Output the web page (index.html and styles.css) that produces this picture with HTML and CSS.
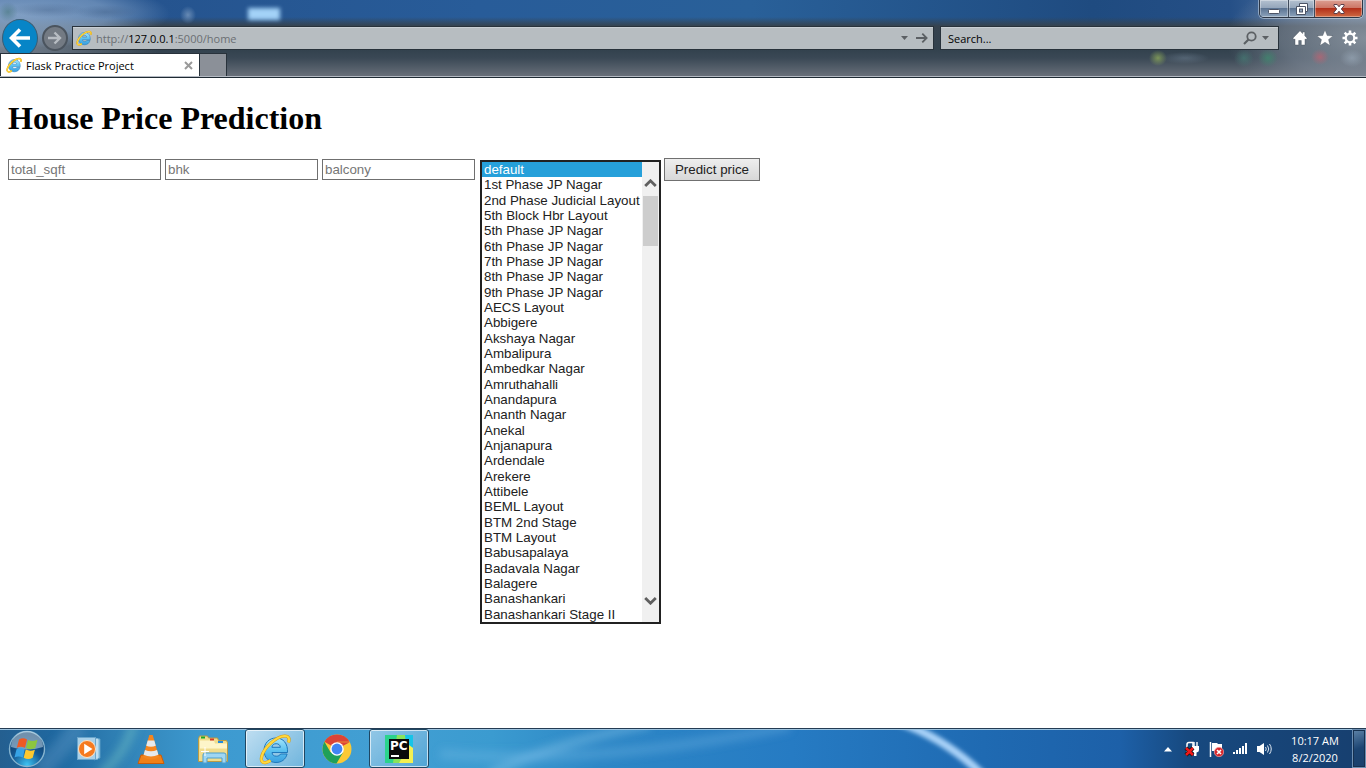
FILE: index.html
```html
<!DOCTYPE html>
<html lang="en">
<head>
<meta charset="utf-8">
<title>Flask Practice Project</title>
<link rel="stylesheet" href="styles.css">
</head>
<body>
<svg class="sprite" aria-hidden="true">
  <defs>
    <linearGradient id="ieBlue" x1="0" y1="0" x2="0" y2="1">
      <stop offset="0" stop-color="#a8e6fc"/><stop offset="0.5" stop-color="#5cc2f0"/><stop offset="1" stop-color="#3a9fdf"/>
    </linearGradient>
    <symbol id="ie" viewBox="0 0 32 32">
      <path d="M28.500 19.500H13C13.300 22 14.800 23.200 17.300 23.200c2 0 3.500-.7 4.300-2.200h6.500C26.700 26.500 22.500 29.500 17 29.500 10 29.500 5 24.500 5 17.500 5 10.300 10 5 17 5c7.300 0 12 5.500 11.500 14.500zM12.900 14.300h8.500c-.3-2.300-1.900-3.600-4.200-3.600-2.400 0-3.900 1.300-4.300 3.600z" fill="url(#ieBlue)" stroke="#1f78bb" stroke-width="1"/>
      <path d="M29.500 9.500C31 5.500 29.500 2.700 25.500 3 17.500 3.600 6 13.500 3 22.500c-1.800 5.200.3 8 4.200 7 1.400-.4 2.800-1 4.300-2" fill="none" stroke="#d89b10" stroke-width="3.200"/>
      <path d="M29.500 9.500C31 5.500 29.500 2.700 25.500 3 17.500 3.600 6 13.500 3 22.500c-1.800 5.200.3 8 4.200 7 1.400-.4 2.800-1 4.300-2" fill="none" stroke="#ffd83c" stroke-width="2.200"/>
    </symbol>
  </defs>
</svg>

<header class="browser">
  <div class="titlebar">
    <div class="window-controls">
      <button class="wc wc-min" type="button" aria-label="Minimize"><svg width="14" height="14" viewBox="0 0 14 14"><rect x="1.500" y="7.500" width="11" height="4" rx="1" fill="#fff" stroke="#4c5466"/></svg></button>
      <button class="wc wc-max" type="button" aria-label="Restore"><svg width="12" height="12" viewBox="0 0 12 12"><path d="M3.500.5h8v8h-2v3h-9v-8h3z" fill="#fff" stroke="#4c5466"/><path d="M3 3.500h6.500v5.500" fill="none" stroke="#4c5466"/><rect x="3.500" y="6" width="3" height="3" fill="#8fa3ba" stroke="#4c5466"/></svg></button>
      <button class="wc wc-close" type="button" aria-label="Close"><svg width="12" height="10" viewBox="0 0 12 10"><path d="M1 .5h3.200L6 2.800 7.800.5H11v1.300L8.300 5 11 8.200v1.300H7.800L6 7.200 4.200 9.500H1V8.200L3.700 5 1 1.800z" fill="#fff" stroke="#5a3e4a"/></svg></button>
    </div>
  </div>
  <div class="nav">
    <button class="back" type="button" aria-label="Back"><svg width="22" height="20" viewBox="0 0 22 20"><path d="M21 10H3M11 1.500L2.500 10l8.500 8.500" fill="none" stroke="#fff" stroke-width="3.600"/></svg></button>
    <button class="forward" type="button" aria-label="Forward"><svg width="14" height="14" viewBox="0 0 14 14"><path d="M0 7h12M6.500 1.500L12 7l-5.500 5.500" fill="none" stroke="#b7bcc2" stroke-width="2.400"/></svg></button>
    <div class="field address">
      <svg width="16" height="16"><use href="#ie"/></svg>
      <div class="url" role="textbox" aria-label="Address">http://<b>127.0.0.1</b>:5000/home</div>
      <button class="plain" type="button" aria-label="Show address history"><svg width="7" height="4" viewBox="0 0 7 4"><path d="M0 0h7L3.500 4z" fill="#5c6064"/></svg></button>
      <button class="plain" type="button" aria-label="Go"><svg width="12" height="10" viewBox="0 0 12 10"><path d="M0 5h10.500M6.300.7L10.600 5 6.300 9.300" fill="none" stroke="#5c6064" stroke-width="1.800"/></svg></button>
    </div>
    <div class="field search">
      <input type="text" placeholder="Search..." aria-label="Search">
      <button class="plain" type="button" aria-label="Search the web"><svg width="14" height="14" viewBox="0 0 14 14"><circle cx="8.500" cy="5.500" r="4.200" fill="none" stroke="#5c6064" stroke-width="1.800"/><path d="M5.500 8.500L1 13" stroke="#5c6064" stroke-width="2.200"/></svg></button>
      <button class="plain" type="button" aria-label="Search options"><svg width="7" height="4" viewBox="0 0 7 4"><path d="M0 0h7L3.500 4z" fill="#5c6064"/></svg></button>
    </div>
    <div class="tools">
      <button class="plain" type="button" aria-label="Home"><svg width="16" height="16" viewBox="0 0 16 16"><path d="M8 .8L.8 8.200l1.400 1.400.8-.7V15h3.700v-4.500h2.600V15H13V8.900l.8.700 1.400-1.400-2.400-2.400V2h-2.200v1.600z" fill="#fff" stroke="#3c4650" stroke-width=".4"/></svg></button>
      <button class="plain" type="button" aria-label="Favorites"><svg width="16" height="16" viewBox="0 0 16 16"><path d="M8 0l2.200 5.500 5.800.4-4.500 3.700 1.500 5.900-5-3.300-5 3.300 1.500-5.900L0 5.900l5.800-.4z" fill="#fff" stroke="#3c4650" stroke-width=".3"/></svg></button>
      <button class="plain" type="button" aria-label="Tools"><svg width="16" height="16" viewBox="0 0 16 16"><path d="M8 .5v3M8 12.500v3M.5 8h3M12.500 8h3M2.700 2.700l2.100 2.100M11.200 11.200l2.100 2.100M13.300 2.700l-2.100 2.100M4.800 11.200l-2.100 2.100" stroke="#fff" stroke-width="2.600"/><circle cx="8" cy="8" r="4.300" fill="none" stroke="#fff" stroke-width="2.200"/></svg></button>
    </div>
  </div>
  <div class="tabs">
    <div class="tab">
      <svg width="16" height="16"><use href="#ie"/></svg>
      <span class="tab-title">Flask Practice Project</span>
      <button class="plain" type="button" aria-label="Close tab"><svg width="9" height="9" viewBox="0 0 9 9"><path d="M1 1l7 7M8 1L1 8" stroke="#9a9a9a" stroke-width="2"/></svg></button>
    </div>
    <button class="new-tab" type="button" aria-label="New tab"></button>
  </div>
</header>

<main class="page">
  <h1>House Price Prediction</h1>
  <form class="predict">
    <input class="text" type="text" placeholder="total_sqft" aria-label="total_sqft">
    <input class="text" type="text" placeholder="bhk" aria-label="bhk">
    <input class="text" type="text" placeholder="balcony" aria-label="balcony">
    <div class="listbox">
      <select size="30" aria-label="Location">
        <option selected>default</option>
        <option>1st Phase JP Nagar</option>
        <option>2nd Phase Judicial Layout</option>
        <option>5th Block Hbr Layout</option>
        <option>5th Phase JP Nagar</option>
        <option>6th Phase JP Nagar</option>
        <option>7th Phase JP Nagar</option>
        <option>8th Phase JP Nagar</option>
        <option>9th Phase JP Nagar</option>
        <option>AECS Layout</option>
        <option>Abbigere</option>
        <option>Akshaya Nagar</option>
        <option>Ambalipura</option>
        <option>Ambedkar Nagar</option>
        <option>Amruthahalli</option>
        <option>Anandapura</option>
        <option>Ananth Nagar</option>
        <option>Anekal</option>
        <option>Anjanapura</option>
        <option>Ardendale</option>
        <option>Arekere</option>
        <option>Attibele</option>
        <option>BEML Layout</option>
        <option>BTM 2nd Stage</option>
        <option>BTM Layout</option>
        <option>Babusapalaya</option>
        <option>Badavala Nagar</option>
        <option>Balagere</option>
        <option>Banashankari</option>
        <option>Banashankari Stage II</option>
      </select>
      <div class="scrollbar" aria-hidden="true">
        <svg width="13" height="8" viewBox="0 0 13 8"><path d="M1.200 7l5.300-5.200L11.800 7" fill="none" stroke="#5f5f5f" stroke-width="2.800"/></svg>
        <div class="track"><div class="thumb"></div></div>
        <svg width="13" height="8" viewBox="0 0 13 8"><path d="M1.200 1l5.300 5.200L11.800 1" fill="none" stroke="#5f5f5f" stroke-width="2.800"/></svg>
      </div>
    </div>
    <button class="submit" type="button">Predict price</button>
  </form>
</main>

<footer class="taskbar">
  <svg class="streaks" viewBox="0 0 1366 38" preserveAspectRatio="none" aria-hidden="true">
    <defs>
      <filter id="soft" filterUnits="userSpaceOnUse" x="-20" y="-20" width="1406" height="80"><feGaussianBlur stdDeviation="2"/></filter>
      <filter id="softer" filterUnits="userSpaceOnUse" x="-20" y="-20" width="1406" height="80"><feGaussianBlur stdDeviation="4"/></filter>
    </defs>
    <path d="M898-8Q945 8 984 46" fill="none" stroke="#a9d2f8" stroke-width="8" filter="url(#soft)"/>
    <g fill="none" filter="url(#softer)">
      <path d="M490 44Q550 14 650-6" stroke="#9ad2f0" stroke-width="9" opacity=".35"/>
      <path d="M440 24Q600 36 790-4" stroke="#8cc8f0" stroke-width="10" opacity=".25"/>
      <path d="M100 44Q124 26 134-6" stroke="#8fe0c8" stroke-width="8" opacity=".35"/>
      <path d="M40 42L80-4" stroke="#7fb0d8" stroke-width="18" opacity=".25"/>
    </g>
  </svg>
  <button class="start" type="button" aria-label="Start">
    <svg width="38" height="38" viewBox="0 0 38 38">
      <defs><radialGradient id="orb" cx=".5" cy=".95" r=".85"><stop offset="0" stop-color="#3ec3f2"/><stop offset=".5" stop-color="#165b96"/><stop offset="1" stop-color="#0d3a66"/></radialGradient></defs>
      <circle cx="19" cy="19" r="17.500" fill="url(#orb)" stroke="#86b4cf" stroke-width="1.400"/>
      <path d="M3 17A16 16 0 0 1 35 17Q19 22 3 17z" fill="#d5e8f4" opacity=".5"/>
      <path d="M11 9.500Q15 7 19 9.500l-2 8.300q-4.300-2-8.200 0z" fill="#ee5a24"/>
      <path d="M20 10q4 2.200 9.500-.2l-2.200 8.200q-4.500 2.300-9.300-.1z" fill="#8cc63f"/>
      <path d="M8.500 19.200q4.200-2 8.300 0l-2 8.300q-4.200-2.200-8.300 0z" fill="#37a3e6"/>
      <path d="M17.700 19.600q4.500 2.200 9.200.1l-2.200 8q-4.500 2.400-9 0z" fill="#fdc82f"/>
    </svg>
  </button>
  <nav class="apps">
    <button class="app" type="button" aria-label="Windows Media Player"><svg width="28" height="28" viewBox="0 0 28 28"><path d="M19 3l6 1v19l-6 2z" fill="#9ccbe6" stroke="#5a9cc4"/><path d="M22 3.500v21" stroke="#e2f2fb"/><rect x="2.500" y="2.500" width="18" height="22" fill="#a8d0e9" stroke="#6aa5cb"/><circle cx="12" cy="14" r="8.500" fill="#f57a20" stroke="#fbe3c8"/><path d="M9.200 8.800v10.400L17.500 14z" fill="#fff"/></svg></button>
    <button class="app" type="button" aria-label="VLC media player"><svg width="30" height="32" viewBox="0 0 30 32"><path d="M5 22h20l3 8.500H2z" fill="#f08018" stroke="#c95c08"/><path d="M13.300 2h3.400L23 24q-8 5-16 0z" fill="#f5861f"/><path d="M11.700 7.500h6.600l1.500 5.200q-4.800 2-9.600 0zM9 17q6 2.500 12 0l1.400 4.800q-7.400 3.500-14.800 0z" fill="#e6e9ec"/></svg></button>
    <button class="app" type="button" aria-label="Windows Explorer"><svg width="34" height="32" viewBox="0 0 34 32"><path d="M2.500 6l1-3h8l1 2h9l1 2.500h8l1 2v19h-29z" fill="#f0dc8c" stroke="#b99a45"/><path d="M4 7.500h14l1 3h12v5H4z" fill="#fdf5c9"/><path d="M5 4.500h4" stroke="#19a829" stroke-width="2"/><path d="M14 6.500h4" stroke="#d93a28" stroke-width="2"/><path d="M22 9h5" stroke="#1e8be0" stroke-width="2"/><path d="M7 30v-8q0-2 2-2h19q2 0 2 2v8h-4v-5H11v5z" fill="#9fd6f2" stroke="#4d9fcd"/><path d="M9 14v9M5 18.500h8" stroke="#fff"/></svg></button>
    <button class="app active" type="button" aria-label="Internet Explorer"><svg width="32" height="32"><use href="#ie"/></svg></button>
    <button class="app" type="button" aria-label="Google Chrome"><svg width="30" height="30" viewBox="0 0 30 30"><circle cx="15" cy="15" r="14.500" fill="#fbc934"/><path d="M15 15L2.440 7.750A14.500 14.500 0 0 1 27.560 7.750H15z" fill="#dc4437"/><path d="M27.800 8.300H15V15z" fill="#dc4437"/><path d="M2.440 7.750A14.500 14.500 0 0 0 14.500 29.500L21 18.500 15 15 8.500 18.200z" fill="#1fa05a"/><circle cx="15" cy="15" r="6.800" fill="#fff"/><circle cx="15" cy="15" r="5.400" fill="#4285f4"/></svg></button>
    <button class="app active" type="button" aria-label="PyCharm"><svg width="28" height="28" viewBox="0 0 28 28"><path d="M0 0h12l4 28H0z" fill="#2bd38c"/><path d="M12 0h9l-3 28H8z" fill="#8be35b"/><path d="M20 0h8v12l-6 6z" fill="#16c4e8"/><path d="M14 28l10-18 4 3v15z" fill="#f4f052"/><rect x="4" y="4" width="20" height="20" fill="#0a0a0a"/><rect x="6" y="20" width="8" height="2" fill="#fff"/><text class="pc" x="5" y="15">PC</text></svg></button>
  </nav>
  <div class="tray">
    <button class="plain" type="button" aria-label="Show hidden icons"><svg width="16" height="16" viewBox="0 0 16 16"><path d="M4 10.500h8L8 6z" fill="#fff"/></svg></button>
    <button class="plain" type="button" aria-label="Power"><svg width="16" height="16" viewBox="0 0 16 16"><path d="M3 13V3.500Q3 1.500 5 1.500h4V5" fill="none" stroke="#fff" stroke-width="1.500"/><path d="M10 1v4M13 1v4" stroke="#fff" stroke-width="1.400"/><path d="M8 5h7v4q0 2-2.500 2.500V15H10v-3.500Q8 11 8 9z" fill="#fff"/><path d="M2 7l7 7M9 7l-7 7" stroke="#111" stroke-width="4"/><path d="M2 7l7 7M9 7l-7 7" stroke="#f01818" stroke-width="2.500"/></svg></button>
    <button class="plain" type="button" aria-label="Action Center"><svg width="16" height="16" viewBox="0 0 16 16"><path d="M2.500 1v15" stroke="#fff" stroke-width="1.500"/><path d="M4 2h5l1 1h4v7H4z" fill="#fff"/><circle cx="11" cy="11" r="4.700" fill="#d8272b" stroke="#f5a9a9" stroke-width=".7"/><path d="M9 9l4 4M13 9l-4 4" stroke="#fff" stroke-width="1.600"/></svg></button>
    <button class="plain" type="button" aria-label="Network"><svg width="16" height="16" viewBox="0 0 16 16"><path d="M1 11h2v2H1zM4 9h2v4H4zM7 7h2v6H7zM10 5h2v8h-2zM13 2h2v11h-2z" fill="#fff"/></svg></button>
    <button class="plain" type="button" aria-label="Volume"><svg width="16" height="16" viewBox="0 0 16 16"><path d="M1 5h2.500L8 2v12l-4.500-3H1z" fill="#fff"/><path d="M9.500 6q1.500 2 0 4M11.500 4.500q2.500 3.500 0 7M13.500 3q3.500 5 0 10" fill="none" stroke="#dfe8f2" stroke-width="1"/></svg></button>
  </div>
  <button class="clock" type="button"><span>10:17 AM</span><span>8/2/2020</span></button>
  <button class="show-desktop" type="button" aria-label="Show desktop"></button>
</footer>
</body>
</html>
```

FILE: styles.css
```css
* { box-sizing: border-box; }

html, body { margin: 0; }

body {
  min-height: 100vh;
  display: flex;
  flex-direction: column;
  background: #fff;
  font-family: "Segoe UI", "Open Sans", sans-serif;
  font-size: 11px;
}

svg { display: block; flex: none; }
.sprite { position: absolute; width: 0; height: 0; }

.plain {
  padding: 0;
  border: 0;
  background: none;
}

/* Browser frame */
.browser {
  display: flex;
  flex-direction: column;
  border-bottom: 1px solid #1f2a33;
  background:
    radial-gradient(9px 8px at 1158px 58px, rgba(150, 180, 90, 0.7), transparent),
    radial-gradient(24px 6px at 1185px 58px, rgba(130, 150, 170, 0.35), transparent),
    radial-gradient(10px 9px at 1244px 58px, rgba(70, 130, 120, 0.6), transparent),
    radial-gradient(10px 9px at 1268px 58px, rgba(60, 140, 110, 0.7), transparent),
    radial-gradient(9px 8px at 1320px 57px, rgba(180, 100, 115, 0.8), transparent),
    radial-gradient(12px 9px at 1352px 58px, rgba(150, 165, 180, 0.7), transparent),
    radial-gradient(8px 9px at 188px 15px, rgba(130, 160, 195, 0.7), transparent),
    radial-gradient(40px 7px at 48px 10px, rgba(60, 90, 130, 0.35), transparent),
    radial-gradient(32px 7px at 106px 12px, rgba(60, 90, 130, 0.4), transparent),
    radial-gradient(10px 10px at 8px 12px, rgba(60, 110, 110, 0.5), transparent),
    radial-gradient(150px 34px at 20px 14px, rgba(140, 170, 205, 0.85), rgba(140, 170, 205, 0.6) 60%, transparent),
    radial-gradient(140px 70px at 1366px 38px, rgba(150, 160, 172, 0.8), rgba(140, 150, 165, 0.5) 60%, transparent),
    radial-gradient(160px 44px at 0 46px, rgba(140, 150, 165, 0.8), transparent),
    linear-gradient(transparent 17px, #36434f 26px, #33424e 50px, #3a4855 58px, #686f79 76px),
    linear-gradient(90deg, #24508a, #285c99 35%, #296099 55%, #1f4b80 80%, #254f86 90%, #6c8db5);
}

.titlebar {
  height: 18px;
  padding: 0 3px 0 248px;
  display: flex;
  justify-content: space-between;
}

.titlebar::before {
  content: "";
  width: 32px;
  height: 12px;
  margin-top: 8px;
  background: #a3d2f7;
  filter: blur(2px);
}

.window-controls {
  display: flex;
  border: 1px solid #2c3645;
  border-top: 0;
  border-radius: 0 0 5px 5px;
  box-shadow: 0 0 0 1px rgba(220, 230, 240, 0.5);
  overflow: hidden;
}

.wc {
  padding: 0;
  border: 0;
  border-right: 1px solid #3f4b5c;
  display: flex;
  align-items: center;
  justify-content: center;
  background: linear-gradient(#b4c1d0, #93a5ba 48%, #5d7593 50%, #8ca3bc);
  box-shadow: inset 0 0 0 1px rgba(255, 255, 255, 0.35);
}

.wc-min { width: 29px; }
.wc-max { width: 26px; }

.wc-close {
  width: 47px;
  border-right: 0;
  background: linear-gradient(#dc9f92, #cc7463 48%, #b3301a 50%, #cf6a43);
}

.nav {
  padding: 8px 8px 3px 2px;
  display: flex;
  align-items: center;
  gap: 4px;
}

.back, .forward {
  flex: none;
  padding: 0;
  border-radius: 50%;
  display: flex;
  align-items: center;
  justify-content: center;
}

.back {
  width: 36px;
  height: 38px;
  margin: -7px 0;
  border: 1px solid #3b5d73;
  background: #0785c7;
}

.forward {
  width: 26px;
  height: 26px;
  margin: -1px 0;
  border: 2px solid #4b545e;
  background: #737a83;
}

.field {
  height: 24px;
  border: 1px solid #28323b;
  display: flex;
  align-items: center;
  background: #b7bdc1;
  box-shadow: inset 0 1px 0 #c9cfd4;
}

.address {
  flex: 1;
  padding: 0 5px 0 3px;
  gap: 8px;
}

.url {
  flex: 1;
  margin-left: -4px;
  color: #6b6f73;
}

.url b { font-weight: 400; color: #000; }

.search {
  width: 25%;
  margin-left: 2px;
  padding: 0 9px 0 7px;
  gap: 5px;
}

.search input {
  flex: 1;
  min-width: 0;
  padding: 0;
  border: 0;
  background: none;
  font: inherit;
}

.search input::placeholder { color: #000; }

.tools {
  padding-left: 9px;
  display: flex;
  gap: 9px;
}

.tabs {
  position: relative;
  z-index: 1;
  height: 24px;
  padding-top: 1px;
  border-bottom: 1px solid #b4bac3;
  display: flex;
}

.tab {
  width: 200px;
  padding: 0 6px 0 5px;
  border: 1px solid #28323b;
  border-width: 0 1px;
  box-shadow: 0 -1px 0 #28323b;
  display: flex;
  align-items: center;
  gap: 4px;
  background: #fff;
}

.tab-title { flex: 1; }

.new-tab {
  width: 27px;
  padding: 0;
  border: 0;
  border-right: 1px solid #28323b;
  box-shadow: 0 -1px 0 #28323b;
  background: #8b9098;
}

/* Page content */
.page {
  flex: 1;
  padding: 0 8px;
}

h1 {
  margin: 22px 0 21px;
  font: bold 32px/37px "Liberation Serif", serif;
}

.predict {
  display: flex;
  align-items: baseline;
  gap: 4px;
}

.predict input, .predict select, .predict .submit {
  font-family: "Liberation Sans", sans-serif;
}

.text {
  width: 153px;
  height: 21px;
  padding: 1px 2px;
  border: 1px solid #6f6f6f;
  color: #212121;
}

.text::placeholder { color: #767676; }

.listbox {
  align-self: flex-start;
  width: 181px;
  margin: 2px -1px 0 1px;
  border: 2px solid #212121;
  display: flex;
}

.listbox select {
  flex: 1;
  min-width: 0;
  height: 460px;
  padding: 0;
  border: 0;
  border-radius: 0;
  outline: 0;
  overflow: hidden;
  color: #212121;
}

.listbox option {
  min-height: 0;
  padding: 0 2px;
  line-height: 15px;
}

.listbox option:nth-child(3n) { padding-top: 1px; }

.listbox option:checked {
  background: linear-gradient(#26a0da, #26a0da);
  -webkit-text-fill-color: #fff;
}

.scrollbar {
  width: 17px;
  padding: 17px 0;
  display: flex;
  flex-direction: column;
  align-items: center;
  gap: 9px;
  background: #f0f0f0;
}

.track {
  flex: 1;
  width: 15px;
}

.thumb {
  height: 50px;
  background: #cdcdcd;
}

.submit {
  width: 96px;
  height: 23px;
  padding: 0;
  border: 1px solid #707070;
  background: linear-gradient(#eee, #d8d8d8);
  color: #212121;
}

/* Taskbar */
.taskbar {
  position: relative;
  height: 40px;
  border-top: 1px solid #243c54;
  box-shadow: inset 0 1px 0 #9cc3df;
  display: flex;
  background: linear-gradient(90deg, #245f90, #1f68a0 4%, #3182b6 9%, #3d9ad0 15%, #429fd3 28%, #3b9bd0 36%, #2d87c6 44%, #267bc3 58%, #1f6ab2 72%, #1d60a8 82%, #17497f 87%, #173f6f);
}

.taskbar > * { position: relative; }

.taskbar > .streaks {
  position: absolute;
  inset: 1px 0 0;
  width: 100%;
  height: 38px;
}

.start {
  width: 59px;
  padding: 0 0 0 8px;
  border: 0;
  background: none;
}

.apps {
  flex: 1;
  display: flex;
  gap: 2px;
}

.app {
  width: 60px;
  padding: 0;
  border: 1px solid transparent;
  border-radius: 3px;
  display: flex;
  align-items: center;
  justify-content: center;
  background: none;
}

.active {
  border-color: #1f4763;
  background: linear-gradient(135deg, rgba(235, 245, 252, 0.75), rgba(170, 210, 235, 0.45));
  box-shadow: inset 0 0 0 1px rgba(255, 255, 255, 0.65);
}

.active:last-child {
  background: linear-gradient(135deg, rgba(225, 240, 250, 0.5), rgba(120, 180, 220, 0.3));
}

.pc {
  font: bold 12px "DejaVu Sans", sans-serif;
  fill: #fff;
}

.tray {
  padding-right: 6px;
  display: flex;
  align-items: center;
  gap: 8px;
}

.clock {
  width: 74px;
  padding: 0;
  border: 0;
  display: flex;
  flex-direction: column;
  align-items: center;
  justify-content: center;
  background: none;
  color: #fff;
  font: inherit;
  line-height: 17px;
}

.show-desktop {
  width: 14px;
  padding: 0;
  border: 1px solid #6d8fb3;
  box-shadow: inset 0 0 0 1px #16304f;
  background: linear-gradient(160deg, #5e83a8, #1c4472 50%, #1a3f6c);
}
```
